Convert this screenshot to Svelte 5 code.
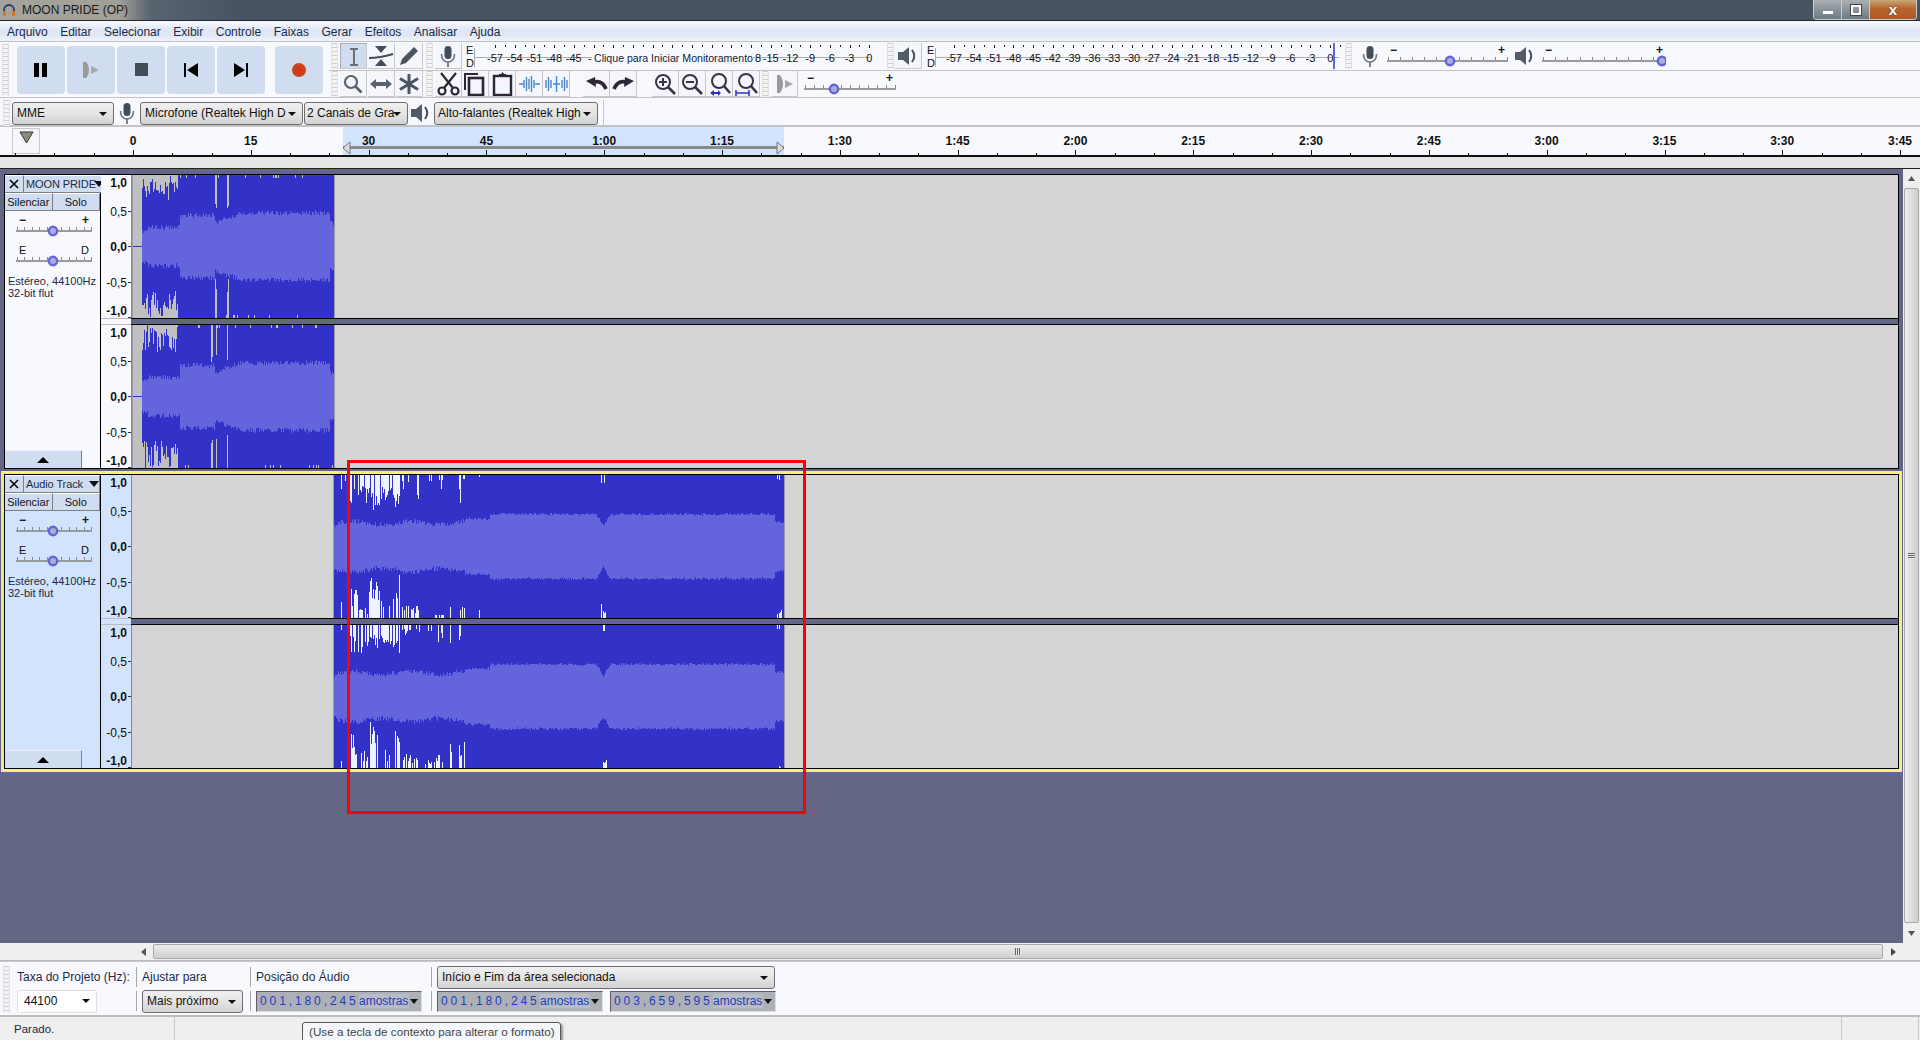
<script>
    const WAVE_LEFT = 132;
    const WAVE_WIDTH = 1766;
    const CH = 143;

    const menus = ['Arquivo', 'Editar', 'Selecionar', 'Exibir', 'Controle', 'Faixas', 'Gerar', 'Efeitos', 'Analisar', 'Ajuda'];
    const rulerLabels = ['0', '15', '30', '45', '1:00', '1:15', '1:30', '1:45', '2:00', '2:15', '2:30', '2:45', '3:00', '3:15', '3:30', '3:45'];
    const dbLabels = [-57, -54, -51, -48, -45, -42, -39, -36, -33, -30, -27, -24, -21, -18, -15, -12, -9, -6, -3, 0];

    // minor ticks every 5s, labels every 15s
    const rulerTicks = [];
    for (let i = -3; i < 48; i++) rulerTicks.push({ x: Math.round(133 + i * 39.27), major: i % 3 === 0 && i >= 0 });

    const rng = (seed) => () => {
        seed = (seed + 0x6d2b79f5) | 0;
        let t = Math.imul(seed ^ (seed >>> 15), 1 | seed);
        t = (t + Math.imul(t ^ (t >>> 7), 61 | t)) ^ t;
        return ((t ^ (t >>> 14)) >>> 0) / 4294967296;
    };

    const column = (x, a, b) => `M${x - WAVE_LEFT + 0.5} ${a}V${b}`;

    // Builds per pixel column paths for one channel
    function channel({ seed, x0, x1, rms, peak, top = [], bottom = [] }) {
        const r = rng(seed);
        const mid = CH / 2;
        let peakPath = '', rmsPath = '', gapPath = '';
        for (let x = x0; x < x1; x++) {
            const amp = peak ? peak(x, r) : 1;
            const amp2 = peak ? peak(x, r) : 1;
            const wiggle = x < 465 ? 0.07 : 0.035;
            const rt = rms(x) + (r() - 0.5) * wiggle;
            const rb = rms(x) + (r() - 0.5) * wiggle;
            peakPath += column(x, Math.round(mid - amp * mid), Math.round(mid + amp2 * mid));
            rmsPath += column(x, Math.round(mid - rt * mid), Math.round(mid + rb * mid));
        }
        for (const [a, b, depth, density] of top) {
            for (let x = a; x < b; x++) {
                if (r() < density) gapPath += column(x, 0, Math.round(depth * (0.35 + r() * 0.65)));
            }
        }
        for (const [a, b, depth, density] of bottom) {
            for (let x = a; x < b; x++) {
                if (r() < density) gapPath += column(x, CH - Math.round(depth * (0.35 + r() * 0.65)), CH);
            }
        }
        return { peakPath, rmsPath, gapPath };
    }

    const rmsIntro = (x) => {
        if (x < 148) return 0.22;
        if (x < 180) return 0.27;
        if (x < 215) return 0.44;
        if (x < 240) return 0.34 + (x - 215) * 0.005;
        if (x < 330) return 0.47;
        return 0.33;
    };
    const peakIntro = (gaps) => (x, r) => {
        if (x < 178) return 0.62 + r() * 0.38;
        if (gaps.includes(x)) return 0.45 + r() * 0.2;
        return r() < 0.06 ? 0.96 : 1;
    };
    const rmsMain = (x) => {
        if (x < 336) return 0.3;
        if (x < 465) return 0.33 + Math.sin(x / 9) * 0.025;
        if (x < 490) return 0.39;
        if (x > 596 && x < 610) return 0.45 - 0.16 * (1 - Math.abs(x - 603) / 7);
        if (x > 774) return 0.34;
        return 0.45;
    };

    const moon = [
        channel({ seed: 11, x0: 142, x1: 334, rms: rmsIntro, peak: peakIntro([215, 216, 227, 228, 160]) }),
        channel({ seed: 23, x0: 142, x1: 334, rms: rmsIntro, peak: peakIntro([211, 212, 216, 227, 164]) })
    ];
    const audio = [
        channel({
            seed: 37, x0: 334, x1: 784, rms: rmsMain,
            top: [[341, 342, 18, 1], [345, 346, 10, 1], [350, 357, 30, 0.9], [358, 364, 25, 0.7], [365, 380, 36, 0.9], [381, 392, 26, 0.7], [393, 400, 38, 0.8], [401, 412, 14, 0.5], [413, 420, 28, 0.4], [428, 432, 8, 0.5], [438, 443, 14, 0.8], [459, 461, 28, 1], [463, 465, 6, 0.6], [479, 480, 3, 1], [601, 602, 17, 1], [604, 605, 14, 1], [777, 780, 7, 0.8]],
            bottom: [[341, 342, 16, 1], [351, 358, 32, 0.8], [359, 368, 12, 0.6], [369, 380, 46, 0.7], [381, 392, 24, 0.5], [393, 400, 44, 0.8], [401, 420, 12, 0.6], [425, 444, 5, 0.4], [450, 451, 22, 1], [459, 465, 16, 0.7], [479, 480, 12, 1], [601, 602, 22, 1], [603, 606, 8, 1], [777, 782, 9, 0.6]]
        }),
        channel({
            seed: 51, x0: 334, x1: 784, rms: rmsMain,
            top: [[341, 342, 8, 1], [350, 356, 28, 0.9], [358, 364, 32, 0.7], [365, 378, 28, 0.9], [379, 392, 20, 0.7], [393, 400, 38, 0.7], [401, 420, 10, 0.5], [428, 432, 7, 0.5], [438, 443, 22, 0.8], [450, 451, 28, 1], [459, 464, 24, 0.7], [603, 606, 10, 0.8], [777, 780, 5, 0.7]],
            bottom: [[341, 342, 18, 1], [351, 358, 36, 0.8], [359, 368, 18, 0.6], [369, 378, 48, 0.7], [381, 392, 20, 0.5], [393, 400, 42, 0.8], [401, 420, 14, 0.5], [425, 444, 10, 0.5], [438, 440, 26, 1], [450, 452, 26, 0.7], [459, 465, 27, 0.7], [603, 607, 13, 1], [779, 781, 3, 1]]
        })
    ];

    const tracks = [
        { name: 'MOON PRIDE', selected: false, x0: 132, x1: 334, start: 142, chans: moon },
        { name: 'Audio Track', selected: true, x0: 333, x1: 784, start: 334, chans: audio }
    ];

    const vticks = [
        { label: '1,0', y: 7, bold: true },
        { label: '0,5', y: 36, tick: true },
        { label: '0,0', y: 71, bold: true, tick: true },
        { label: '-0,5', y: 107, tick: true },
        { label: '-1,0', y: 135, bold: true }
    ];
</script>

{#snippet mic(size)}
    <svg width={size} height={size} viewBox="0 0 26 26">
        <rect x="9.5" y="3" width="7" height="13" rx="3.5" fill="#434d5a" />
        <path d="M6.5 11c0 5.500 3 8 6.500 8s6.500-2.500 6.500-8" fill="none" stroke="#6d7480" stroke-width="1.600" />
        <path d="M13 19v5" stroke="#6d7480" stroke-width="1.800" />
    </svg>
{/snippet}

{#snippet speaker(size)}
    <svg width={size} height={size} viewBox="0 0 26 26">
        <path d="M3 9h5l6-5v18l-6-5H3z" fill="#525b68" />
        <path d="M17 7c3 4 3 8 0 12" fill="none" stroke="#434d5a" stroke-width="2" />
    </svg>
{/snippet}

{#snippet slider(w, thumb, lo, hi, ticks = 11)}
    <svg class="slider" width={w} height="22" viewBox="0 0 {w} 22">
        <text x="3" y="9" class={['sl', { lr: lo === 'E' }]}>{lo}</text>
        <text x={w - 3} y="9" text-anchor="end" class={['sl', { lr: lo === 'E' }]}>{hi}</text>
        {#each Array(ticks) as _, i}
            <path d="M{Math.round(1 + (i * (w - 2)) / (ticks - 1)) + 0.5} 12v3" stroke="#8a8a8a" />
        {/each}
        <path d="M0 16H{w}" stroke="#9a9a9a" stroke-width="2" />
        <circle cx={thumb} cy="16" r="4.200" fill="#a8b0d8" stroke="#6464dc" stroke-width="2.400" />
    </svg>
{/snippet}

{#snippet meter(w, start, step, boxed)}
    <svg class="meter" width={w} height="27" viewBox="0 0 {w} 27">
        <text x="3" y="11" class="mt">E</text>
        <text x="3" y="24" class="mt">D</text>
        <path d="M11.500 5v19M11.500 14.500H{w - 3}" stroke="#aaa" fill="none" />
        {#each dbLabels as d, i}
            <path d="M{Math.round(start + i * step) + 0.5} 2v3M{Math.round(start + i * step + step / 2) + 0.5} 2v2" stroke="#222" />
            {#if !boxed || i < 5 || i > 13}
                <text x={start + i * step} y="19" text-anchor="middle" class="mt">{d}</text>
            {/if}
        {/each}
        {#if boxed}
            <rect x="129" y="5" width="161" height="19" fill="#f8f9ff" />
            <text x="125" y="19" class="mt">-</text>
            <text x="131" y="19" class="mt clique">Clique para Iniciar Monitoramento</text>
            <text x="292" y="19" class="mt">8</text>
        {/if}
    </svg>
{/snippet}

{#snippet select(label, cls)}
    <div class={['select', cls]}><span>{label}</span></div>
{/snippet}

{#snippet timecode(digits, cls)}
    <div class={['time', cls]}>
        <span class="digits">{digits}</span>
        <span class="unit">amostras</span>
        <span class="time-drop"></span>
    </div>
{/snippet}

<div class="app">
    <header class="titlebar">
        <svg width="14" height="14" viewBox="0 0 14 14">
            <path d="M2 11V7a5 5 0 0 1 10 0v4" fill="none" stroke="#2c3a72" stroke-width="1.800" />
            <rect x="1" y="8" width="3" height="5" rx="1" fill="#d8761e" />
            <rect x="10" y="8" width="3" height="5" rx="1" fill="#d8761e" />
        </svg>
        <span class="title">MOON PRIDE (OP)</span>
        <div class="winbtns">
            <div class="winbtn"><i class="min"></i></div>
            <div class="winbtn"><i class="max"></i></div>
            <div class="winbtn close">x</div>
        </div>
    </header>

    <nav class="menubar">
        {#each menus as m}<span>{m}</span>{/each}
    </nav>

    <div class="dock">
        <div class="transport">
            <div class="grip tall"></div>
            <div class="tbtn">
                <svg width="48" height="48"><path d="M17 17h5v14h-5zM25 17h5v14h-5z" fill="#000" /></svg>
            </div>
            <div class="tbtn">
                <svg width="48" height="48"><path d="M16 16h3c2 2 3 5 3 8s-1 6-3 8h-3z" fill="#9a9a9a" /><path d="M24 20l8 4-8 4z" fill="#a8a8a8" /></svg>
            </div>
            <div class="tbtn">
                <svg width="48" height="48"><rect x="18" y="17" width="13" height="13" fill="#434d5a" /></svg>
            </div>
            <div class="tbtn">
                <svg width="48" height="48"><path d="M17 17h2v14h-2zM31 17v14l-11-7z" fill="#000" /></svg>
            </div>
            <div class="tbtn">
                <svg width="48" height="48"><path d="M29 17h2v14h-2zM17 17v14l11-7z" fill="#000" /></svg>
            </div>
            <div class="tbtn rec">
                <svg width="48" height="48"><circle cx="24" cy="24" r="7" fill="#c2491c" /><circle cx="24" cy="24" r="4" fill="#d8341a" /></svg>
            </div>
        </div>

        <div class="rows">
            <div class="row first">
                <div class="grip"></div>
                <div class="tools">
                    <div class="btn active">
                        <svg width="26" height="26"><path d="M9 5h8M13 5v16M9 21h8" fill="none" stroke="#6d7078" stroke-width="2" /></svg>
                    </div>
                    <div class="btn">
                        <svg width="26" height="26"><path d="M7 3h12l-6 7zM7 23h12l-6-7z" fill="#434d5a" /><path d="M1 15c8 0 14-1 24-4" fill="none" stroke="#434d5a" stroke-width="2.200" /></svg>
                    </div>
                    <div class="btn">
                        <svg width="26" height="26"><path d="M18 4l4 4L10 20l-6 2 2-6z" fill="#4c5460" /></svg>
                    </div>
                </div>
                <div class="grip g3"></div>
                <div class="btn g2">{@render mic(26)}</div>
                <div class="g1">{@render meter(410, 32, 19.7, true)}</div>
                <div class="grip g14"></div>
                <div class="btn g1">{@render speaker(26)}</div>
                <div class="g2">{@render meter(418, 30, 19.8, false)}</div>
                <div class="level"></div>
                <div class="grip g3"></div>
                <div class="g8 icon-cell">{@render mic(26)}</div>
                <div class="g7">{@render slider(121, 63, '−', '+')}</div>
                <div class="g7 icon-cell">{@render speaker(26)}</div>
                <div class="g7">{@render slider(124, 120, '−', '+')}</div>
            </div>

            <div class="row">
                <div class="grip"></div>
                <div class="tools">
                    <div class="btn">
                        <svg width="26" height="26"><circle cx="11" cy="11" r="6" fill="none" stroke="#5a626e" stroke-width="2.200" /><path d="M15.500 15.500l6 6" stroke="#5a626e" stroke-width="2.600" /></svg>
                    </div>
                    <div class="btn">
                        <svg width="26" height="26"><path d="M2 13l6-5v3h10V8l6 5-6 5v-3H8v3z" fill="#5a626e" /></svg>
                    </div>
                    <div class="btn">
                        <svg width="26" height="26"><path d="M13 3v20M4 7.500l18 11M22 7.500l-18 11" stroke="#4c5460" stroke-width="3" /></svg>
                    </div>
                </div>
                <div class="grip g3"></div>
                <div class="tight g2">
                    <div class="btn">
                        <svg width="27" height="26"><g fill="none" stroke="#2e2535" stroke-width="2.200"><circle cx="7" cy="20" r="3.500" /><circle cx="20" cy="20" r="3.500" /><path d="M9 17L21 2M18 17L6 2" /></g></svg>
                    </div>
                    <div class="btn">
                        <svg width="27" height="26"><path d="M3 19V3h13" fill="none" stroke="#2e2535" stroke-width="2" /><rect x="7" y="7" width="14" height="17" fill="none" stroke="#2e2535" stroke-width="2.600" /></svg>
                    </div>
                    <div class="btn">
                        <svg width="27" height="26"><rect x="5" y="5" width="17" height="19" fill="none" stroke="#2e2535" stroke-width="2.400" /><path d="M10 6V3h2l1.500-2 1.500 2h2v3z" fill="#2e2535" /></svg>
                    </div>
                    <div class="btn">
                        <svg width="27" height="26"><path d="M3 13h5M19 13h5M8 9v8M10.500 6v14M13 8v10M15.500 5v16M18 9v8" stroke="#4a86c8" stroke-width="1.400" fill="none" /></svg>
                    </div>
                    <div class="btn">
                        <svg width="27" height="26"><path d="M3 9v8M5.500 6v14M8 9v8M10 13h7M13.500 5v16M19 9v8M21.500 6v14M24 9v8" stroke="#4a86c8" stroke-width="1.400" fill="none" /></svg>
                    </div>
                </div>
                <div class="tight g13">
                    <div class="btn">
                        <svg width="27" height="26"><path d="M3 10l9-4 1 10z" fill="#2e2535" /><path d="M9 12c6-3 11-1 14 6" fill="none" stroke="#2e2535" stroke-width="3.600" /></svg>
                    </div>
                    <div class="btn">
                        <svg width="27" height="26"><path d="M24 10l-9-4-1 10z" fill="#2e2535" /><path d="M18 12c-6-3-11-1-14 6" fill="none" stroke="#2e2535" stroke-width="3.600" /></svg>
                    </div>
                </div>
                <div class="tight g15">
                    <div class="btn">
                        <svg width="27" height="26"><circle cx="11" cy="11" r="7" fill="none" stroke="#3a3440" stroke-width="2" /><path d="M16 16l7 7" stroke="#3a3440" stroke-width="2.600" /><path d="M7 11h8M11 7v8" stroke="#3a3440" stroke-width="2" /></svg>
                    </div>
                    <div class="btn">
                        <svg width="27" height="26"><circle cx="11" cy="11" r="7" fill="none" stroke="#3a3440" stroke-width="2" /><path d="M16 16l7 7" stroke="#3a3440" stroke-width="2.600" /><path d="M7 11h8" stroke="#3a3440" stroke-width="2" /></svg>
                    </div>
                    <div class="btn">
                        <svg width="27" height="26"><circle cx="13" cy="10" r="7" fill="none" stroke="#3a3440" stroke-width="2" /><path d="M18 15l6 7" stroke="#3a3440" stroke-width="2.600" /><path d="M4 22l4-3v2h4v-2l3 3-3 3v-2H8v2z" fill="#3030c8" /></svg>
                    </div>
                    <div class="btn">
                        <svg width="27" height="26"><circle cx="13" cy="10" r="7" fill="none" stroke="#3a3440" stroke-width="2" /><path d="M18 15l6 7" stroke="#3a3440" stroke-width="2.600" /><path d="M3 19v6M16 19v6M3 22h13" fill="none" stroke="#3030c8" stroke-width="1.500" /></svg>
                    </div>
                </div>
                <div class="grip g2"></div>
                <div class="btn g2">
                    <svg width="27" height="26"><path d="M6 4h3c2 3 3 6 3 9s-1 6-3 9H6z" fill="#9a9a9a" /><path d="M14 9l8 4-8 4z" fill="#a8a8a8" /></svg>
                </div>
                <div class="g6">{@render slider(92, 30, '−', '+')}</div>
            </div>
        </div>

        <div class="row3">
            <div class="grip short"></div>
            {@render select('MME', 'w-mme')}
            <div class="icon-cell mic3">{@render mic(26)}</div>
            {@render select('Microfone (Realtek High D', 'w-in')}
            {@render select('2 Canais de Gra', 'w-ch')}
            <div class="icon-cell spk3">{@render speaker(26)}</div>
            {@render select('Alto-falantes (Realtek High', 'w-out')}
            <div class="vsep"></div>
        </div>
    </div>

    <div class="ruler">
        <svg width="1920" height="28" viewBox="0 0 1920 28">
            <rect x="343" y="0" width="441" height="28" fill="#d2e3fd" />
            <rect x="12.500" y="1.500" width="27" height="25" fill="#f4f6fc" stroke="#c8c8c8" />
            <path d="M20 5h13l-6.500 11z" fill="#8e8e7c" stroke="#333" />
            {#each rulerTicks as t}
                <path d="M{t.x + 0.5} {t.major ? 23 : 26}V28" stroke="#111" />
            {/each}
            {#each rulerLabels as l, i}
                <text x={133 + i * 117.8} y="18" text-anchor="middle" class="rl">{l}</text>
            {/each}
            <path d="M343 20.500H784" stroke="#8a8a8a" stroke-width="3" />
            <path d="M350 15v12l-7-6zM777 15v12l7-6z" fill="#dcdcdc" stroke="#777" />
        </svg>
    </div>
    <div class="strip"></div>

    <main class="main">
        <div class="tracks">
            {#each tracks as t}
                <section class={['track', { selected: t.selected }]}>
                    <div class="inner">
                        <div class="panel">
                            <div class="panel-head">
                                <div class="pbtn x">
                                    <svg width="10" height="10"><path d="M1 1l8 8M9 1l-8 8" stroke="#000" stroke-width="1.500" /></svg>
                                </div>
                                <div class="pbtn tname"><span>{t.name}</span><i class="drop"></i></div>
                            </div>
                            <div class="panel-head">
                                <div class="pbtn">Silenciar</div>
                                <div class="pbtn">Solo</div>
                            </div>
                            <div class="psl gain">{@render slider(76, 37, '−', '+')}</div>
                            <div class="psl pan">{@render slider(76, 37, 'E', 'D')}</div>
                            <div class="info">Estéreo, 44100Hz<br />32-bit flut</div>
                            <div class="collapse"><i></i></div>
                        </div>
                        <div class="chans">
                            {#each t.chans as c, n}
                                {#if n === 1}
                                    <div class="chsep"><div class="sep-ruler"></div><div class="sep-bar"></div></div>
                                {/if}
                                <div class="chan">
                                    <svg class="vruler" width="31" height={CH} viewBox="0 0 31 {CH}">
                                        {#each vticks as v}
                                            <text x="26" y={v.y + 4.500} text-anchor="end" class={['vl', { b: v.bold }]}>{v.label}</text>
                                            {#if v.tick}<path d="M27 {v.y + 0.5}h3" stroke="#333" />{/if}
                                        {/each}
                                        <path d="M27 142.500h3" stroke="#333" />
                                        <path d="M30.500 0V{CH}" stroke="#888" />
                                    </svg>
                                    <svg class="wave" width={WAVE_WIDTH} height={CH} viewBox="0 0 {WAVE_WIDTH} {CH}" shape-rendering="crispEdges">
                                        <rect x={t.x0 - WAVE_LEFT} y="0" width={t.x1 - t.x0} height={CH} fill="#c0c0c0" />
                                        {#if !t.selected}<path d="M0 71.500h{t.start - WAVE_LEFT}" stroke="#3232c8" />{/if}
                                        <path d={c.peakPath} stroke="#3232c8" fill="none" />
                                        <path d={c.rmsPath} stroke="#6464dc" fill="none" />
                                        {#if t.selected}<path d={c.gapPath} stroke="#eef3ff" fill="none" />{/if}
                                        <path d="M{t.x1 - WAVE_LEFT + 0.5} 0V{CH}M{t.x0 - WAVE_LEFT + 0.5} 0V{CH}" stroke="#9a9aa8" />
                                    </svg>
                                </div>
                            {/each}
                        </div>
                    </div>
                </section>
            {/each}
        </div>
        <aside class="vscroll">
            <svg class="arrow-up" width="17" height="10"><path d="M5 7l3.500-5 3.500 5z" fill="#555" /></svg>
            <div class="vthumb"><i></i></div>
            <svg class="arrow-dn" width="17" height="10"><path d="M5 3h7l-3.500 5z" fill="#555" /></svg>
        </aside>
    </main>

    <div class="hscroll">
        <svg class="harrow" width="8" height="10"><path d="M6 1v8L1 5z" fill="#555" /></svg>
        <div class="hthumb"><i></i></div>
        <svg class="harrow" width="8" height="10"><path d="M2 1v8l5-4z" fill="#444" /></svg>
    </div>

    <div class="selbar">
        <div class="grip selgrip"></div>
        <div class="col c1">
            <div class="cell"><span class="lbl">Taxa do Projeto (Hz):</span></div>
            <div class="cell"><div class="rate">44100<i class="drop sm"></i></div></div>
        </div>
        <div class="col c2">
            <div class="cell sep"><span class="lbl">Ajustar para</span></div>
            <div class="cell sep">{@render select('Mais próximo', 'w-snap')}</div>
        </div>
        <div class="col c3">
            <div class="cell sep"><span class="lbl">Posição do Áudio</span></div>
            <div class="cell sep">{@render timecode('001,180,245', '')}</div>
        </div>
        <div class="col c4">
            <div class="cell sep">{@render select('Início e Fim da área selecionada', 'w-mode')}</div>
            <div class="cell sep pair">
                {@render timecode('001,180,245', '')}
                {@render timecode('003,659,595', '')}
            </div>
        </div>
    </div>

    <footer class="status">
        <div class="st a">Parado.</div>
        <div class="st b"></div>
        <div class="st c"></div>
    </footer>

    <div class="tooltip">(Use a tecla de contexto para alterar o formato)</div>
    <div class="redbox"></div>
</div>

<style>
    :global(body) {
        margin: 0;
        background: #636785;
    }
    .app {
        position: relative;
        width: 1920px;
        height: 1040px;
        overflow: hidden;
        font-family: "Liberation Sans", Arial, sans-serif;
        font-size: 12px;
        color: #111;
        display: flex;
        flex-direction: column;
    }
    svg {
        display: block;
    }
    text {
        font-family: "Liberation Sans", Arial, sans-serif;
    }

    /* title + menu */
    .titlebar {
        height: 20px;
        display: flex;
        align-items: center;
        gap: 6px;
        padding-left: 2px;
        background: linear-gradient(90deg, #a4a49c 0, #a09f98 120px, #596470 150px, #47535f 240px, #47535f 100%);
        border-bottom: 1px solid #23262c;
    }
    .title {
        font-size: 12px;
        color: #1a1a1a;
    }
    .winbtns {
        margin-left: auto;
        margin-right: 3px;
        display: flex;
        height: 19px;
        border: 1px solid #c8ccd0;
        border-top: none;
        border-radius: 0 0 4px 4px;
        overflow: hidden;
    }
    .winbtn {
        width: 27px;
        display: flex;
        align-items: center;
        justify-content: center;
        background: linear-gradient(#aab0b4, #6c7880);
        border-right: 1px solid #c8ccd0;
    }
    .winbtn .min {
        width: 10px;
        height: 3px;
        background: #fff;
        margin-top: 5px;
    }
    .winbtn .max {
        width: 6px;
        height: 6px;
        border: 2px solid #fff;
        box-shadow: 0 0 0 1px #444;
    }
    .winbtn.close {
        width: 46px;
        border: none;
        background: linear-gradient(#c8a878 0, #b8652c 45%, #b05a28 100%);
        color: #fff;
        font-weight: bold;
        font-size: 15px;
        line-height: 14px;
        text-shadow: 0 0 2px #333;
    }
    .menubar {
        height: 18px;
        padding-top: 2px;
        display: flex;
        align-items: center;
        padding-left: 7px;
        gap: 12.500px;
        background: linear-gradient(#f8f9ff 0, #dfe7f6 45%, #dfe7f6 70%, #f0f3fb 100%);
        border-bottom: 1px solid #c0c0c0;
        color: #1c2a44;
    }

    /* toolbars */
    .dock {
        background: #f8f9ff;
        display: grid;
        grid-template-columns: 329px 1fr;
        border-bottom: 2px solid #c4c4c4;
    }
    .transport {
        display: flex;
        align-items: center;
        height: 55px;
        padding: 1px 0 0 2px;
        box-sizing: border-box;
    }
    .grip {
        flex: none;
        width: 7px;
        height: 26px;
        margin-left: 2px;
        background: repeating-linear-gradient(#cfcfcf 0 1px, #f4f4f4 1px 4px);
        border-left: 1px solid #e0e0e0;
        border-right: 1px solid #e0e0e0;
        box-sizing: border-box;
    }
    .grip.tall {
        height: 52px;
        margin-left: 0;
        margin-right: 8px;
    }
    .tbtn {
        width: 48px;
        height: 48px;
        margin-right: 2px;
        background: #d0ddf1;
        border-radius: 4px;
    }
    .tbtn.rec {
        margin-left: 8px;
    }
    .rows {
        display: flex;
        flex-direction: column;
    }
    .row {
        display: flex;
        align-items: center;
        height: 26px;
    }
    .row.first {
        height: 28px;
        border-bottom: 1px solid #c4c4c4;
    }
    .tools {
        display: flex;
        gap: 1px;
        margin-left: 2px;
    }
    .tight {
        display: flex;
    }
    .btn {
        flex: none;
        width: 27px;
        height: 26px;
        box-sizing: border-box;
        background: #f4f6fc;
        border-right: 1px solid #c8c8c8;
        border-bottom: 1px solid #c8c8c8;
        overflow: hidden;
    }
    .btn.active {
        background: #d0ddf1;
        border-top: 1px solid #aab;
        border-left: 1px solid #aab;
    }
    .icon-cell {
        flex: none;
        width: 20px;
    }
    .icon-cell svg {
        margin: 0 -3px;
    }
    .g1 { margin-left: 1px; }
    .g2 { margin-left: 2px; }
    .g3 { margin-left: 3px; }
    .g6 { margin-left: 6px; }
    .g7 { margin-left: 7px; }
    .g8 { margin-left: 8px; }
    .g13 { margin-left: 13px; }
    .g14 { margin-left: 14px; }
    .g15 { margin-left: 15px; }
    .mt {
        font-size: 11px;
        fill: #111;
    }
    .clique {
        font-size: 10.600px;
        fill: #101c3c;
    }
    .level {
        width: 2px;
        height: 26px;
        margin-left: -9px;
        margin-right: 7px;
        background: #6464dc;
    }
    .sl {
        font-size: 12px;
        font-weight: bold;
        fill: #111;
    }
    .sl.lr {
        font-size: 11px;
        font-weight: normal;
    }
    .row3 {
        grid-column: 1 / 3;
        height: 28px;
        padding-top: 3px;
        display: flex;
        align-items: center;
        border-top: 1px solid #c4c4c4;
        box-sizing: border-box;
    }
    .grip.short {
        margin-left: 3px;
        margin-right: 2px;
    }
    .select {
        flex: none;
        height: 23px;
        box-sizing: border-box;
        display: flex;
        align-items: center;
        padding: 0 14px 0 4px;
        position: relative;
        background: linear-gradient(#f0f0f0, #e4e4e4 50%, #d2d2d2);
        border: 1px solid #6e6e6e;
        border-radius: 3px;
        color: #111;
    }
    .select span {
        white-space: nowrap;
    }
    .select::after {
        content: '';
        position: absolute;
        right: 6px;
        top: 9px;
        border: 4px solid transparent;
        border-top: 4px solid #111;
        border-bottom: none;
    }
    .w-mme { width: 102px; }
    .w-in { width: 163px; margin-right: 1px; }
    .w-ch { width: 104px; padding-left: 2px; }
    .w-out { width: 164px; padding-left: 3px; }
    .w-snap { width: 101px; }
    .w-mode { width: 338px; }
    .mic3 {
        margin: 0 3px 0 3px;
    }
    .spk3 {
        margin: 0 3px 0 3px;
    }
    .vsep {
        width: 1px;
        height: 26px;
        margin-left: 5px;
        background: #c4c4c4;
    }

    /* timeline */
    .ruler {
        height: 28px;
        background: #f8f9ff;
        border-bottom: 2px solid #111;
    }
    .rl {
        font-size: 12px;
        font-weight: bold;
        fill: #111;
    }
    .strip {
        height: 11px;
        background: #e6e6e6;
        border-bottom: 1px solid #222;
    }

    /* tracks */
    .main {
        height: 774px;
        display: flex;
        background: #636785;
    }
    .tracks {
        width: 1903px;
        padding-top: 5px;
        box-sizing: border-box;
    }
    .track {
        margin: 0 4px 0 4px;
        width: 1895px;
        box-sizing: border-box;
        margin-bottom: 2px;
    }
    .track.selected {
        margin: 0;
        margin-left: 1px;
        width: 1901px;
        border: 3px solid;
        border-color: #f8f078 #f4ec88 #f8f078 #f0e880;
    }
    .inner {
        display: flex;
        border: 1px solid #000;
        background: #d4d4d4;
    }
    .panel {
        width: 96px;
        flex: none;
        box-sizing: border-box;
        display: flex;
        flex-direction: column;
        background: #f8f9ff;
        border-right: 1px solid #000;
        font-size: 11px;
    }
    .selected .panel, .selected .sep-ruler {
        background: #d2e3fd;
    }
    .panel-head {
        display: flex;
        height: 18px;
    }
    .pbtn {
        box-sizing: border-box;
        background: #d0ddf1;
        border-right: 1px solid #808080;
        border-bottom: 1px solid #808080;
        border-top: 1px solid #fff;
        display: flex;
        align-items: center;
        justify-content: center;
        flex: 1;
    }
    .panel-head .x {
        flex: 0 0 19px;
    }
    .tname {
        justify-content: space-between;
        padding-left: 2px;
        white-space: nowrap;
    }
    .tname span {
        color: #1c2a44;
        letter-spacing: -0.100px;
    }
    .drop {
        flex: none;
        width: 0;
        height: 0;
        margin-left: -2px;
        border: 5px solid transparent;
        border-top: 6px solid #111;
        border-bottom: none;
    }
    .drop.sm {
        margin-left: 0;
        border-width: 4px;
        border-bottom: none;
    }
    .psl {
        margin-left: 11px;
    }
    .gain {
        margin-top: 4px;
    }
    .pan {
        margin-top: 8px;
    }
    .info {
        margin: 8px 0 0 3px;
        line-height: 12px;
        color: #1c2a44;
    }
    .collapse {
        margin-top: auto;
        width: 77px;
        height: 18px;
        box-sizing: border-box;
        background: #d0dcf0;
        border-top: 1px solid #eef;
        border-right: 1px solid #808080;
        display: flex;
        align-items: center;
        justify-content: center;
    }
    .collapse i {
        border: 6px solid transparent;
        border-bottom: 6px solid #000;
        border-top: none;
    }
    .chans {
        flex: 1;
        min-width: 0;
    }
    .chan {
        display: flex;
        height: 143px;
    }
    .vruler {
        flex: none;
        background: #f8f9ff;
    }
    .selected .vruler {
        background: #d2e3fd;
    }
    .vl {
        font-size: 12px;
        fill: #111;
    }
    .vl.b {
        font-weight: bold;
    }
    .wave {
        flex: none;
    }
    .chsep {
        display: flex;
        height: 7px;
    }
    .sep-ruler {
        width: 30px;
        background: #f8f9ff;
        border-top: 1px solid #bbb;
        border-bottom: 1px solid #bbb;
        box-sizing: border-box;
    }
    .sep-bar {
        flex: 1;
        background: #636785;
        border-top: 1px solid #000;
        border-bottom: 1px solid #000;
    }
    .vscroll {
        width: 17px;
        background: #efefef;
        display: flex;
        flex-direction: column;
        align-items: center;
        padding-top: 5px;
        box-sizing: border-box;
    }
    .vthumb {
        width: 15px;
        height: 735px;
        margin: 4px 0 5px;
        box-sizing: border-box;
        border: 1px solid #a8a8a8;
        border-radius: 2px;
        background: linear-gradient(90deg, #ececec, #cfcfcf);
        display: flex;
        align-items: center;
        justify-content: center;
    }
    .vthumb i {
        width: 7px;
        height: 6px;
        background: repeating-linear-gradient(#666 0 1px, #e8e8e8 1px 2px);
    }
    .hscroll {
        height: 18px;
        box-sizing: border-box;
        background: #efefef;
        display: flex;
        align-items: center;
        padding-left: 140px;
        border-bottom: 1px solid #b8b8b8;
    }
    .harrow {
        flex: none;
    }
    .hthumb {
        width: 1730px;
        height: 15px;
        margin: 0 6px 0 5px;
        box-sizing: border-box;
        border: 1px solid #a8a8a8;
        border-radius: 2px;
        background: linear-gradient(#ececec, #cfcfcf);
        display: flex;
        align-items: center;
        justify-content: center;
    }
    .hthumb i {
        width: 6px;
        height: 7px;
        background: repeating-linear-gradient(90deg, #666 0 1px, #e8e8e8 1px 2px);
    }

    /* selection bar */
    .selbar {
        height: 56px;
        box-sizing: border-box;
        background: #f8f9ff;
        border-top: 1px solid #c8c8c8;
        border-bottom: 2px solid #bcbcbc;
        display: flex;
        padding-top: 3px;
    }
    .grip.selgrip {
        height: 47px;
        margin: 1px 7px 0 3px;
    }
    .col {
        display: flex;
        flex-direction: column;
    }
    .c1 { width: 119px; }
    .c2 { width: 114px; }
    .c3 { width: 181px; }
    .c4 { width: 345px; }
    .cell {
        height: 24px;
        display: flex;
        align-items: center;
        box-sizing: border-box;
    }
    .cell.sep {
        position: relative;
        padding-left: 6px;
    }
    .cell.sep::before {
        content: '';
        position: absolute;
        left: 0;
        top: 2px;
        bottom: 2px;
        width: 1px;
        background: #a8a8a8;
    }
    .lbl {
        color: #1c2a44;
        white-space: nowrap;
    }
    .cell.pair {
        gap: 7px;
    }
    .rate {
        width: 80px;
        height: 23px;
        box-sizing: border-box;
        background: #fff;
        border: 1px solid #e0e0e0;
        border-radius: 2px;
        display: flex;
        align-items: center;
        justify-content: space-between;
        padding: 0 6px 0 6px;
    }
    .time {
        width: 166px;
        height: 21px;
        box-sizing: border-box;
        display: flex;
        align-items: center;
        background: #aeb0b8;
        border: 1px solid #5c5c64;
        border-right-color: #ddd;
        border-bottom-color: #ddd;
        padding-left: 3px;
        color: #1c3cc0;
    }
    .digits {
        letter-spacing: 2.900px;
        width: 99px;
        white-space: nowrap;
    }
    .unit {
        background: #b8bcc6;
        padding-right: 1px;
    }
    .time-drop {
        flex: none;
        width: 0;
        height: 0;
        margin-left: 1px;
        border: 4px solid transparent;
        border-top: 5px solid #111;
        border-bottom: none;
    }

    /* status */
    .status {
        flex: 1;
        background: #efefef;
        display: flex;
    }
    .st {
        box-sizing: border-box;
        border-right: 1px solid #c8c8c8;
        display: flex;
        align-items: center;
        padding-left: 14px;
        color: #1c2a44;
        font-size: 11.500px;
    }
    .st.a { width: 175px; }
    .st.b { width: 1667px; }
    .st.c { width: 77px; }

    /* overlays */
    .tooltip {
        position: absolute;
        left: 302px;
        top: 1022px;
        width: 259px;
        height: 24px;
        box-sizing: border-box;
        padding: 2px 0 0 6px;
        font-size: 11.700px;
        background: #f5f7fc;
        border: 1px solid #555;
        border-radius: 3px;
        color: #444;
        box-shadow: 2px 2px 2px #999;
        white-space: nowrap;
    }
    .redbox {
        position: absolute;
        left: 347px;
        top: 460px;
        width: 459px;
        height: 354px;
        box-sizing: border-box;
        border: 3px solid #f00;
        pointer-events: none;
    }
</style>
